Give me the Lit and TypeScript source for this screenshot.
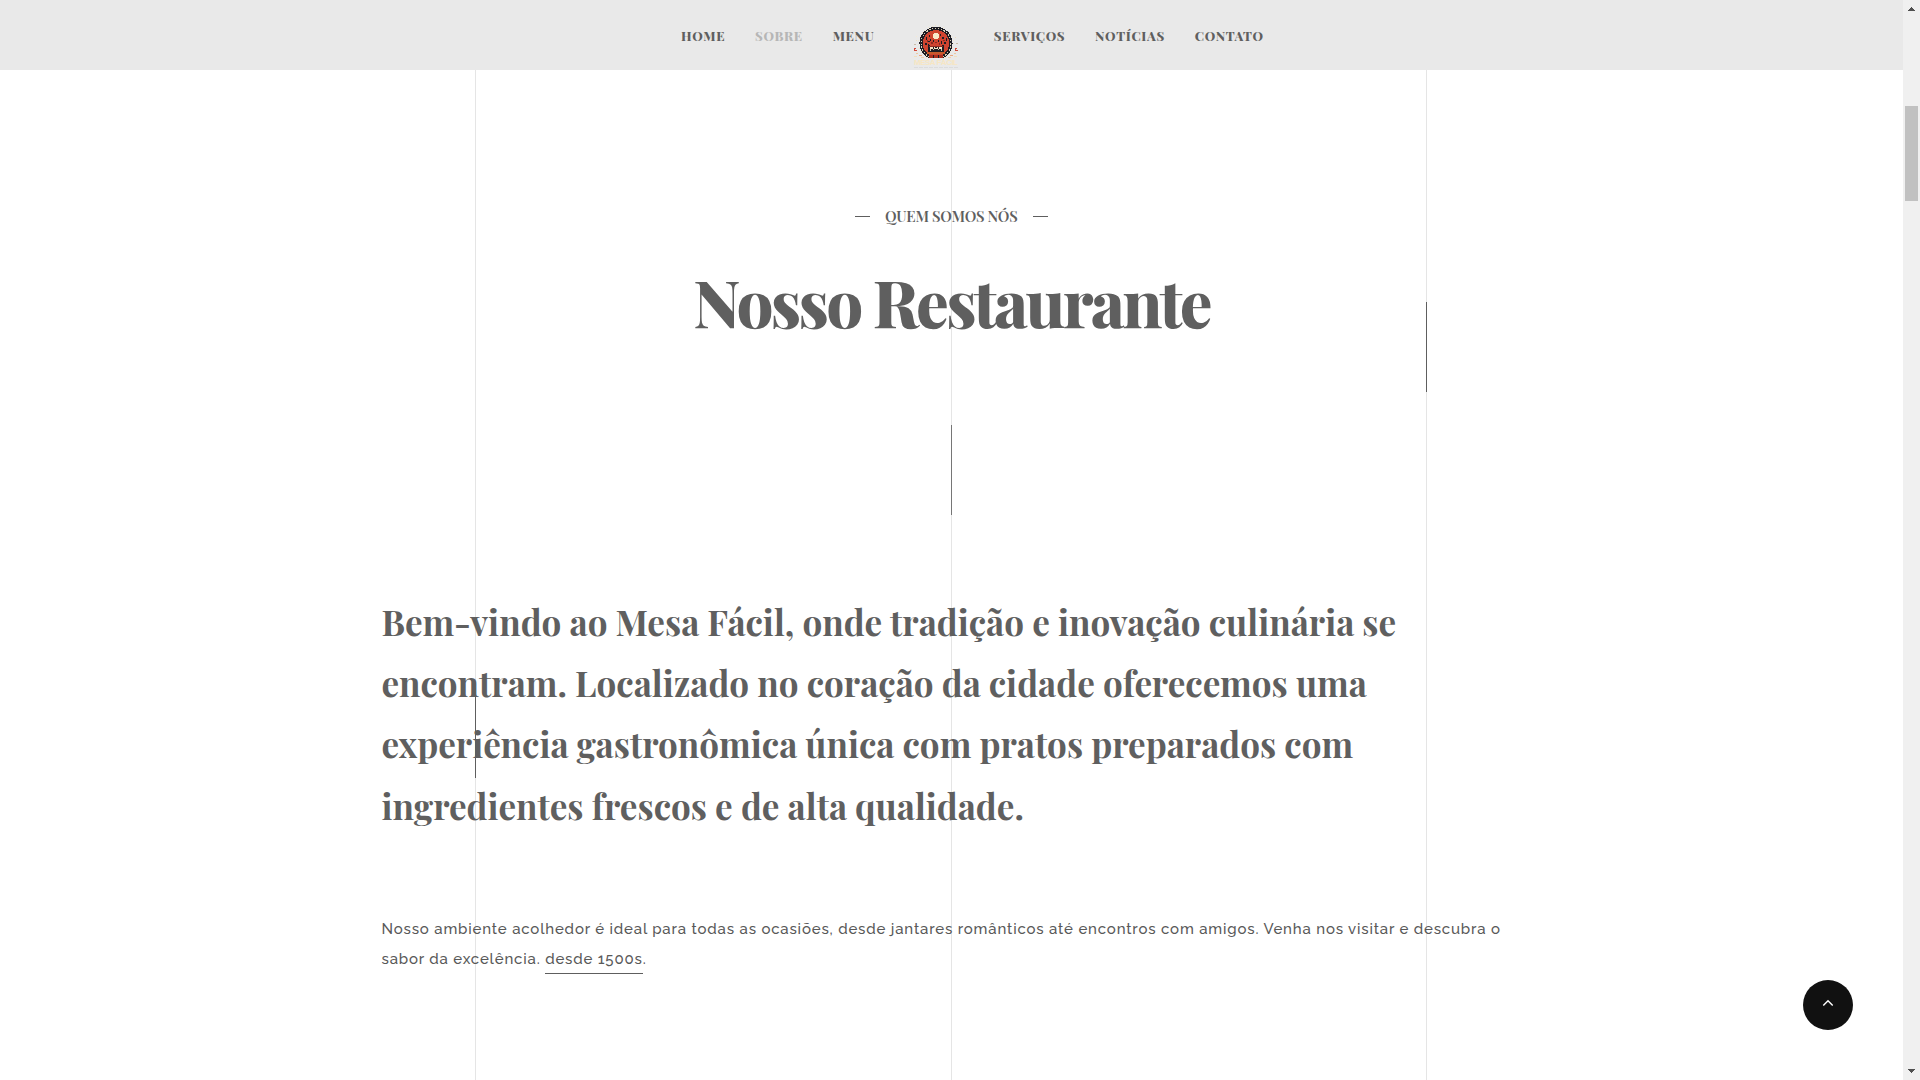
import { LitElement, html, svg, css } from "lit";
import { customElement } from "lit/decorators.js";
import { classMap } from "lit/directives/class-map.js";

const LEFT_LINKS = ["HOME", "SOBRE", "MENU"];
const RIGHT_LINKS = ["SERVIÇOS", "NOTÍCIAS", "CONTATO"];
const ACTIVE = "SOBRE";

const LEAD = [
  "Bem-vindo ao Mesa Fácil, onde tradição e inovação culinária se",
  "encontram. Localizado no coração da cidade oferecemos uma",
  "experiência gastronômica única com pratos preparados com",
  "ingredientes frescos e de alta qualidade.",
];

/* Emblem details as [x, y, width, height, colour] on a 46x43 pixel grid. */
const PIXELS: [number, number, number, number, string][] = [
  [13, 12, 1, 3, "#1d1d24"], [15, 16, 2, 1, "#1d1d24"], [12, 18, 2, 2, "#1d1d24"],
  [16, 10, 1, 2, "#1d1d24"], [17, 14, 1, 2, "#1d1d24"], [29, 12, 2, 2, "#1d1d24"],
  [28, 16, 1, 3, "#1d1d24"], [31, 17, 2, 2, "#1d1d24"], [33, 13, 1, 3, "#1d1d24"],
  [27, 9, 1, 2, "#1d1d24"], [20, 15, 1, 2, "#1d1d24"], [25, 15, 1, 2, "#1d1d24"],
  [14, 15, 1, 2, "#8c2a20"], [18, 17, 2, 2, "#8c2a20"], [26, 18, 1, 2, "#8c2a20"],
  [30, 15, 2, 1, "#8c2a20"], [15, 19, 1, 2, "#1d1d24"], [22, 17, 2, 1, "#8c2a20"],
  [15, 22, 16, 6, "#1d1d24"], [15, 20, 2, 3, "#1d1d24"], [29, 20, 2, 3, "#1d1d24"],
  [16, 21, 14, 1, "#8c2a20"], [17, 22, 3, 2, "#f6e3c4"], [21, 22, 1, 2, "#f6e3c4"],
  [22, 23, 2, 1, "#f6e3c4"], [24, 22, 1, 2, "#f6e3c4"], [26, 22, 3, 2, "#f6e3c4"],
  [17, 24, 1, 2, "#cfc0a6"], [20, 24, 1, 1, "#cfc0a6"], [25, 24, 1, 1, "#cfc0a6"],
  [28, 24, 1, 2, "#cfc0a6"],
  [14, 27, 18, 2, "#c65a2c"], [16, 30, 14, 3, "#a9301f"], [20, 30, 1, 3, "#1d1d24"],
  [25, 30, 1, 3, "#1d1d24"],
  [1, 23, 2, 1, "#d24a3a"], [1, 24, 1, 2, "#d24a3a"], [2, 25, 2, 1, "#d24a3a"],
  [42, 23, 2, 1, "#d24a3a"], [42, 24, 1, 2, "#d24a3a"], [43, 25, 2, 1, "#d24a3a"],
  [3, 15, 1, 1, "#efe0c0"], [42, 12, 1, 1, "#efe0c0"], [1, 19, 2, 1, "#c9bda8"],
  [43, 18, 2, 1, "#c9bda8"], [3, 11, 1, 1, "#f6ead0"], [3, 28, 2, 1, "#eec9a0"],
  [6, 30, 3, 1, "#e9a983"], [37, 30, 3, 1, "#e9a983"], [41, 28, 2, 1, "#eec9a0"],
  [1, 31, 3, 1, "#f3dfbd"], [41, 31, 3, 1, "#f3dfbd"], [8, 32, 3, 1, "#f0cfae"],
  [35, 32, 3, 1, "#f0cfae"],
];

@customElement("mesa-logo")
export class MesaLogo extends LitElement {
  static styles = css`
    :host { display: block; width: 46px; height: 43px; }
    svg { display: block; }
    .name { font: 700 8px "Liberation Sans", Arial, sans-serif; fill: #f7e6c2; }
  `;

  render() {
    return html`
      <svg width="46" height="43" viewBox="0 0 46 43" shape-rendering="crispEdges">
        <circle cx="23" cy="18" r="17.2" fill="none" stroke="#f0e2c4" stroke-width="0.8" stroke-dasharray="1 3"></circle>
        <circle cx="23" cy="18.3" r="16.6" fill="#1d1d24"></circle>
        <circle cx="23" cy="18.3" r="15" fill="none" stroke="#d9cdb4" stroke-width="1" stroke-dasharray="1.6 1.4"></circle>
        <circle cx="23" cy="18.3" r="13.2" fill="#cf4430"></circle>
        <circle cx="23" cy="11" r="3" fill="#f8e8cb"></circle>
        ${PIXELS.map(([x, y, w, h, c]) => svg`<rect x=${x} y=${y} width=${w} height=${h} fill=${c}></rect>`)}
        <rect x="8" y="33" width="30" height="3" fill="#e9e9e9"></rect>
        <text class="name" x="1" y="40" textLength="44">MESA FÁCIL</text>
        <path d="M1 42.5H45" stroke="#dcdcdc" stroke-dasharray="4 1"></path>
      </svg>
    `;
  }
}

@customElement("site-nav")
export class SiteNav extends LitElement {
  static styles = css`
    :host { display: block; }
    .bar {
      box-sizing: border-box;
      height: 70px;
      padding-left: 681px;
      background: #e9e9e9;
      display: flex;
      align-items: flex-start;
    }
    .links {
      display: flex;
      gap: 29.8px;
      padding-top: 26px;
      font: 800 13px/20px "Playfair Display", "Liberation Serif", serif;
      letter-spacing: 0.65px;
    }
    .link { color: #5f5f5f; text-decoration: none; white-space: nowrap; }
    .link.active { color: #b6b6b6; }
    .logo { margin: 25px 35px 0 38.4px; }
  `;

  private link(label: string) {
    return html`<a class=${classMap({ link: true, active: label === ACTIVE })}>${label}</a>`;
  }

  render() {
    return html`
      <nav class="bar">
        <div class="links">${LEFT_LINKS.map((l) => this.link(l))}</div>
        <mesa-logo class="logo"></mesa-logo>
        <div class="links">${RIGHT_LINKS.map((l) => this.link(l))}</div>
      </nav>
    `;
  }
}

@customElement("scroll-track")
export class ScrollTrack extends LitElement {
  static styles = css`
    :host {
      box-sizing: border-box;
      width: 17px;
      height: 100%;
      padding: 7px 0 7px;
      background: #f0f0f0;
      display: flex;
      flex-direction: column;
      align-items: center;
    }
    .thumb { width: 13px; height: 95px; margin: 95px 0 auto; background: #c1c1c1; }
    svg { display: block; }
  `;

  render() {
    return html`
      <svg width="7" height="4" shape-rendering="crispEdges"><path d="M3 0h1v1h1v1h1v1h1v1H0V3h1V2h1V1h1z" fill="#505050"></path></svg>
      <div class="thumb"></div>
      <svg width="7" height="4" shape-rendering="crispEdges"><path d="M0 0h7v1H6v1H5v1H4v1H3V3H2V2H1V1H0z" fill="#505050"></path></svg>
    `;
  }
}

@customElement("app-root")
export class AppRoot extends LitElement {
  static styles = css`
    :host { display: block; width: 1920px; height: 1080px; overflow: hidden; }
    .page { display: flex; height: 1080px; background: #fff; color: #5f5f5f; }
    .view { position: relative; width: 1903px; height: 1080px; overflow: hidden; }
    .guide { position: absolute; top: 70px; bottom: 0; width: 1px; background: #e5e5e5; }
    .guide::after { content: ""; position: absolute; left: 0; width: 1px; height: 90px; background: #5e5e5e; }
    .g1 { left: 475px; }
    .g1::after { top: 618px; }
    .g2 { left: 951px; }
    .g2::after { top: 355px; background: #767676; }
    .g3 { left: 1426px; }
    .g3::after { top: 232px; }
    .content { position: relative; width: 1140px; margin: 0 auto; }
    .eyebrow {
      display: flex;
      justify-content: center;
      align-items: center;
      padding-top: 134px;
      font: 600 15px/24px "Playfair Display", "Liberation Serif", serif;
      letter-spacing: -0.3px;
    }
    .dash { width: 15px; height: 1px; margin-top: 1px; background: #5e5e5e; }
    .eyebrow-text { margin: 0 15.5px 0 15px; }
    .title {
      margin: 41px 0 0;
      text-align: center;
      font: 800 65px/65px "Playfair Display", "Liberation Serif", serif;
      letter-spacing: -2.65px;
    }
    .lead {
      margin: 256.85px 0 0;
      font: 700 35px/61.25px "Playfair Display", "Liberation Serif", serif;
    }
    .line { display: block; white-space: nowrap; }
    .body {
      margin: 78.15px 0 0;
      color: #595959;
      font: 500 15px/30px Raleway, "Open Sans", sans-serif;
      letter-spacing: 0.825px;
    }
    .since { display: inline-block; height: 29px; border-bottom: 1px solid #5e5e5e; }
    .to-top {
      position: absolute;
      left: 1803px;
      top: 980px;
      width: 50px;
      height: 50px;
      border-radius: 50%;
      background: #111;
      display: grid;
      place-items: center;
    }
    .to-top svg { display: block; margin-top: -4px; }
  `;

  render() {
    return html`
      <div class="page">
        <div class="view">
          <div class="guide g1"></div>
          <div class="guide g2"></div>
          <div class="guide g3"></div>
          <site-nav></site-nav>
          <main class="content">
            <div class="eyebrow">
              <span class="dash"></span>
              <span class="eyebrow-text">QUEM SOMOS NÓS</span>
              <span class="dash"></span>
            </div>
            <h2 class="title">Nosso Restaurante</h2>
            <p class="lead">${LEAD.map((l) => html`<span class="line">${l}</span>`)}</p>
            <p class="body">
              <span class="line">Nosso ambiente acolhedor é ideal para todas as ocasiões, desde jantares românticos até encontros com amigos. Venha nos visitar e descubra o</span>
              <span class="line">sabor da excelência. <a class="since">desde 1500s</a>.</span>
            </p>
          </main>
          <a class="to-top">
            <svg width="12" height="8" viewBox="0 0 12 8" fill="none" stroke="#fff" stroke-width="1.4">
              <path d="M1.3 6.6 6 1.7 10.7 6.6"></path>
            </svg>
          </a>
        </div>
        <scroll-track></scroll-track>
      </div>
    `;
  }
}
